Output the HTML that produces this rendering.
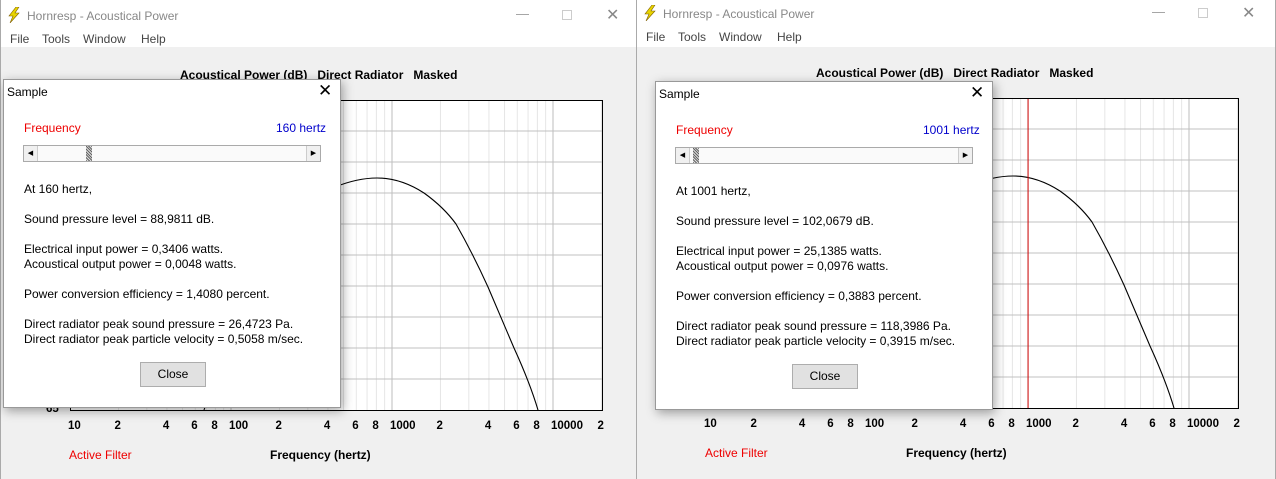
<!DOCTYPE html>
<html><head><meta charset="utf-8"><style>
*{margin:0;padding:0;box-sizing:border-box}
body{width:1276px;height:479px;overflow:hidden;background:#f0f0f0;font-family:"Liberation Sans",sans-serif;position:relative}
.a{position:absolute;white-space:nowrap}
.win{position:absolute;top:0;height:479px;background:#f0f0f0;border-left:1px solid #aaa;border-right:1px solid #aaa}
.tb{position:absolute;left:0;right:0;top:0;height:47px;background:#fff}
.title{font-size:12px;color:#888}
.menu{font-size:12px;color:#444}
.hdr{font-size:12px;font-weight:bold;color:#000}
.ax{font-size:11.5px;font-weight:bold;color:#000}
.dlg{position:absolute;width:338px;height:329px;background:#fff;border:1px solid #999;box-shadow:2px 3px 10px rgba(0,0,0,.35)}
.dlg .a{font-size:12px;color:#000}
.sb{position:absolute;height:17px;border:1px solid #aaa;background:#fafafa}
.btn{position:absolute;width:66px;height:25px;border:1px solid #adadad;background:#e1e1e1;font-size:12px;text-align:center;line-height:23px}
</style></head><body>

<div class="win" style="left:0;width:637px">
<div class="tb"></div>
<svg class="a" style="left:6px;top:7px" width="14" height="16" viewBox="0 0 14 16"><path d="M9 0L2 9h4L3 16l9-10H8l4-6z" fill="#e8d400" stroke="#806000" stroke-width=".6"/></svg>
<div class="a title" style="left:26px;top:9px">Hornresp - Acoustical Power</div>
<div class="a" style="left:515px;top:6px;color:#999;font-size:13px">—</div>
<div class="a" style="left:561px;top:10px;width:10px;height:10px;border:1px solid #ccc"></div>
<div class="a" style="left:605px;top:5px;color:#888;font-size:16px">✕</div>
<div class="a menu" style="left:9px;top:32px">File</div>
<div class="a menu" style="left:41px;top:32px">Tools</div>
<div class="a menu" style="left:82px;top:32px">Window</div>
<div class="a menu" style="left:140px;top:32px">Help</div>
<div class="a hdr" style="left:179px;top:68px">Acoustical Power (dB)&nbsp;&nbsp; Direct Radiator&nbsp;&nbsp; Masked</div>
<svg class="a plot" style="left:69px;top:100px" width="533" height="311" data-c="0"></svg>
<div class="a ax" style="left:45px;top:403px">65</div>
<div class="axl" data-x="69" data-y="420"></div>
<div class="a" style="left:68px;top:448px;font-size:12px;color:#e00">Active Filter</div>
<div class="a hdr" style="left:269px;top:448px">Frequency (hertz)</div>
</div>

<div class="win" style="left:636px;width:640px">
<div class="tb"></div>
<svg class="a" style="left:6px;top:5px" width="14" height="16" viewBox="0 0 14 16"><path d="M9 0L2 9h4L3 16l9-10H8l4-6z" fill="#e8d400" stroke="#806000" stroke-width=".6"/></svg>
<div class="a title" style="left:26px;top:7px">Hornresp - Acoustical Power</div>
<div class="a" style="left:515px;top:4px;color:#999;font-size:13px">—</div>
<div class="a" style="left:561px;top:8px;width:10px;height:10px;border:1px solid #ccc"></div>
<div class="a" style="left:605px;top:3px;color:#888;font-size:16px">✕</div>
<div class="a menu" style="left:9px;top:30px">File</div>
<div class="a menu" style="left:41px;top:30px">Tools</div>
<div class="a menu" style="left:82px;top:30px">Window</div>
<div class="a menu" style="left:140px;top:30px">Help</div>
<div class="a hdr" style="left:179px;top:66px">Acoustical Power (dB)&nbsp;&nbsp; Direct Radiator&nbsp;&nbsp; Masked</div>
<svg class="a plot" style="left:69px;top:98px" width="533" height="311" data-c="1"></svg>
<div class="axl" data-x="69" data-y="418"></div>
<div class="a" style="left:68px;top:446px;font-size:12px;color:#e00">Active Filter</div>
<div class="a hdr" style="left:269px;top:446px">Frequency (hertz)</div>
</div>

<div class="dlg" style="left:3px;top:79px">
<div class="a" style="left:3px;top:5px">Sample</div>
<div class="a" style="left:314px;top:1px;font-size:17px">✕</div>
<div class="a" style="left:20px;top:41px;color:#e00">Frequency</div>
<div class="a" style="left:272px;top:41px;color:#00c">160 hertz</div>
<div class="sb" style="left:19px;top:65px;width:298px">
<div class="a" style="left:0;top:0;width:14px;height:15px;border-right:1px solid #ccc;background:#f0f0f0;font-size:7px;line-height:15px;text-align:center">◀</div>
<div class="a" style="left:62px;top:0;width:6px;height:15px;background:repeating-linear-gradient(45deg,#666 0 1px,#ddd 1px 2px)"></div>
<div class="a" style="right:0;top:0;width:14px;height:15px;border-left:1px solid #ccc;background:#f0f0f0;font-size:7px;line-height:15px;text-align:center">▶</div>
</div>
<div class="a" style="left:20px;top:102px">At 160 hertz,</div>
<div class="a" style="left:20px;top:132px">Sound pressure level = 88,9811 dB.</div>
<div class="a" style="left:20px;top:162px">Electrical input power = 0,3406 watts.</div>
<div class="a" style="left:20px;top:177px">Acoustical output power = 0,0048 watts.</div>
<div class="a" style="left:20px;top:207px">Power conversion efficiency = 1,4080 percent.</div>
<div class="a" style="left:20px;top:237px">Direct radiator peak sound pressure = 26,4723 Pa.</div>
<div class="a" style="left:20px;top:252px">Direct radiator peak particle velocity = 0,5058 m/sec.</div>
<div class="btn" style="left:136px;top:282px">Close</div>
</div>

<div class="dlg" style="left:655px;top:81px">
<div class="a" style="left:3px;top:5px">Sample</div>
<div class="a" style="left:314px;top:1px;font-size:17px">✕</div>
<div class="a" style="left:20px;top:41px;color:#e00">Frequency</div>
<div class="a" style="left:267px;top:41px;color:#00c">1001 hertz</div>
<div class="sb" style="left:19px;top:65px;width:298px">
<div class="a" style="left:0;top:0;width:14px;height:15px;border-right:1px solid #ccc;background:#f0f0f0;font-size:7px;line-height:15px;text-align:center">◀</div>
<div class="a" style="left:17px;top:0;width:6px;height:15px;background:repeating-linear-gradient(45deg,#666 0 1px,#ddd 1px 2px)"></div>
<div class="a" style="right:0;top:0;width:14px;height:15px;border-left:1px solid #ccc;background:#f0f0f0;font-size:7px;line-height:15px;text-align:center">▶</div>
</div>
<div class="a" style="left:20px;top:102px">At 1001 hertz,</div>
<div class="a" style="left:20px;top:132px">Sound pressure level = 102,0679 dB.</div>
<div class="a" style="left:20px;top:162px">Electrical input power = 25,1385 watts.</div>
<div class="a" style="left:20px;top:177px">Acoustical output power = 0,0976 watts.</div>
<div class="a" style="left:20px;top:207px">Power conversion efficiency = 0,3883 percent.</div>
<div class="a" style="left:20px;top:237px">Direct radiator peak sound pressure = 118,3986 Pa.</div>
<div class="a" style="left:20px;top:252px">Direct radiator peak particle velocity = 0,3915 m/sec.</div>
<div class="btn" style="left:136px;top:282px">Close</div>
</div>

<script>
var D=161;
function X(f){return Math.log10(f/10)*D;}
document.querySelectorAll('svg.plot').forEach(function(s){
 var h='<rect x="0" y="0" width="533" height="311" fill="#fff"/>';
 [10,100,1000,10000].forEach(function(d){for(var m=1;m<10;m++){var f=d*m;if(f>20000)break;var x=X(f);h+='<line x1="'+x+'" y1="0" x2="'+x+'" y2="311" stroke="'+(m==1?'#bcbcbc':'#e6e6e6')+'"/>';}});
 for(var i=1;i<10;i++){var y=i*31;h+='<line x1="0" y1="'+y+'" x2="533" y2="'+y+'" stroke="#c0c0c0"/>';}
 h+='<path d="M134 310 C160 230 220 110 265 87 C285 79 298 78 307 78 C325 78 340 84 354 93 C368 103 378 113 386 124 C398 145 408 165 418 187 L444 248 C455 272 462 290 468 310" fill="none" stroke="#000" stroke-width="1.1"/>';
 if(s.getAttribute('data-c')=='1'){var x=X(1001);h+='<line x1="'+x+'" y1="0" x2="'+x+'" y2="311" stroke="#c00"/>';}
 h+='<rect x=".5" y=".5" width="532" height="310" fill="none" stroke="#000"/>';
 s.innerHTML=h;
});
document.querySelectorAll('.axl').forEach(function(e){
 var bx=+e.dataset.x,by=+e.dataset.y,h='';
 var L=[[10,'10'],[20,'2'],[40,'4'],[60,'6'],[80,'8'],[100,'100'],[200,'2'],[400,'4'],[600,'6'],[800,'8'],[1000,'1000'],[2000,'2'],[4000,'4'],[6000,'6'],[8000,'8'],[10000,'10000'],[20000,'2']];
 L.forEach(function(l){var x=bx+X(l[0])-(l[1].length==1?4:2);h+='<div class="a ax" style="left:'+x+'px;top:'+by+'px">'+l[1]+'</div>';});
 e.outerHTML=h;
});
</script>
</body></html>
